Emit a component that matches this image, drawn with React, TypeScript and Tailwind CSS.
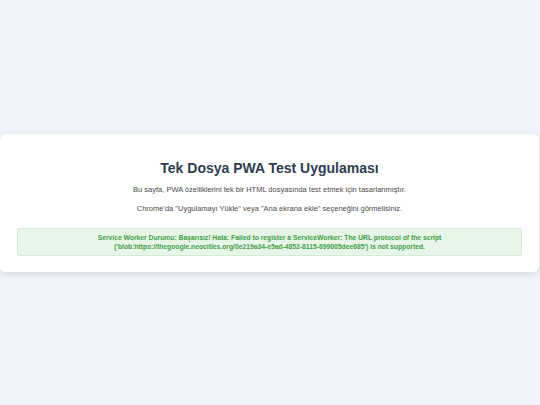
export default function App() {
  return (
    <div
      className="min-h-[405px] bg-[#f0f5fb] flex items-center"
      style={{ fontFamily: '"Liberation Sans", Arial, sans-serif' }}
    >
      <div className="w-[539px] bg-white rounded-[6px] shadow-[0_2px_8px_rgba(0,0,0,0.12)] px-[17px] pt-[24px] pb-[16px] text-center">
        <h1 className="text-[14px] leading-[20px] font-bold text-[#2c3e50]">
          Tek Dosya PWA Test Uygulaması
        </h1>
        <p className="mt-[6px] text-[7.5px] leading-[12px] text-[#4a4a4a]">
          Bu sayfa, PWA özelliklerini tek bir HTML dosyasında test etmek için tasarlanmıştır.
        </p>
        <p className="mt-[7px] text-[7.5px] leading-[12px] text-[#4a4a4a]">
          Chrome'da "Uygulamayı Yükle" veya "Ana ekrana ekle" seçeneğini görmelisiniz.
        </p>
        <div className="mt-[13px] bg-[#e8f5e9] border border-[#d4ecd6] rounded-[2px] py-[4px] px-2 text-[6.75px] leading-[9px] font-bold text-[#43a047]">
          Service Worker Durumu: Başarısız! Hata: Failed to register a ServiceWorker: The URL protocol of the script
          <br />
          ('blob:https://thegoogle.neocities.org/0e219a34-e5ad-4852-8115-699005dee685') is not supported.
        </div>
      </div>
    </div>
  )
}
